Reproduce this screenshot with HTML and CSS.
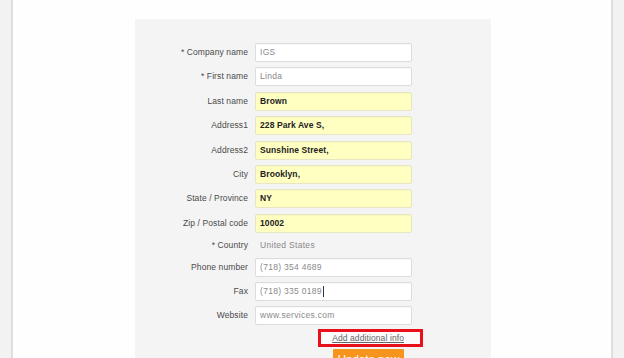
FILE: index.html
```html
<!DOCTYPE html>
<html>
<head>
<meta charset="utf-8">
<link rel="stylesheet" href="styles.css">
</head>
<body>
<div class="page">
  <div class="panel">
    <div class="form">
      <div class="label">* Company name</div>
      <div class="field">IGS</div>
      <div class="label">* First name</div>
      <div class="field">Linda</div>
      <div class="label">Last name</div>
      <div class="field filled">Brown</div>
      <div class="label">Address1</div>
      <div class="field filled">228 Park Ave S,</div>
      <div class="label">Address2</div>
      <div class="field filled">Sunshine Street,</div>
      <div class="label">City</div>
      <div class="field filled">Brooklyn,</div>
      <div class="label">State / Province</div>
      <div class="field filled">NY</div>
      <div class="label">Zip / Postal code</div>
      <div class="field filled">10002</div>
      <div class="label short">* Country</div>
      <div class="plain short">United States</div>
      <div class="label">Phone number</div>
      <div class="field">(718) 354 4689</div>
      <div class="label">Fax</div>
      <div class="field">(718) 335 0189<span class="caret"></span></div>
      <div class="label">Website</div>
      <div class="field">www.services.com</div>
      <div class="actions">
        <div class="highlight"><a class="more" href="#">Add additional info</a></div>
        <button class="update">Update now</button>
      </div>
    </div>
  </div>
</div>
</body>
</html>
```
FILE: styles.css
```css
html, body {
  margin: 0;
  height: 100%;
  overflow: hidden;
}
body {
  background: #f2f2f2;
  font-family: "Liberation Sans", Arial, sans-serif;
}
.page {
  margin: 0 11px;
  height: 100%;
  background: #fefefe;
  border-left: 2px solid #dedede;
  border-right: 2px solid #dedede;
  padding-top: 19px;
  box-sizing: border-box;
}
.panel {
  margin-left: 122px;
  width: 356px;
  height: 400px;
  background: #f4f4f4;
  padding-top: 24px;
  box-sizing: border-box;
}
.form {
  display: grid;
  grid-template-columns: 113px 157px;
  column-gap: 7px;
  row-gap: 5.4px;
  align-items: center;
}
.label {
  text-align: right;
  font-size: 8.5px;
  color: #4a4a4a;
  letter-spacing: 0.1px;
  line-height: 19px;
}
.label.short, .plain.short {
  line-height: 14px;
}
.plain {
  font-size: 8.5px;
  color: #8a8a8a;
  letter-spacing: 0.3px;
  padding-left: 5px;
}
.field {
  height: 19px;
  box-sizing: border-box;
  border: 1px solid #dcdcdc;
  border-radius: 2px;
  background: #fff;
  font-size: 8.5px;
  line-height: 17px;
  color: #8a8a8a;
  padding-left: 4px;
  letter-spacing: 0.3px;
  box-shadow: inset 0 1px 1px rgba(0,0,0,0.03);
}
.field.filled {
  background: #ffffc2;
  border-color: #e6e6c4;
  color: #222;
  font-weight: bold;
  letter-spacing: 0.1px;
}
.caret {
  display: inline-block;
  width: 0;
  height: 11px;
  border-left: 1px solid #333;
  vertical-align: middle;
  margin-left: 1px;
}
.actions {
  grid-column: 2;
  display: flex;
  flex-direction: column;
  align-items: flex-end;
  margin-top: -1.8px;
}
.highlight {
  border: 3px solid #e8101a;
  background: #fbfbfb;
  height: 18px;
  box-sizing: border-box;
  padding: 0 16px 0 11px;
  margin-right: -11px;
  display: flex;
  align-items: center;
}
.more {
  font-size: 8.5px;
  color: #666;
  letter-spacing: 0.1px;
  text-decoration: underline;
}
.update {
  margin-top: 2px;
  margin-right: 8px;
  width: 71px;
  height: 20px;
  border: 0;
  border-radius: 1px;
  background: #f7941d;
  color: #fff;
  font-family: "Liberation Sans", Arial, sans-serif;
  font-size: 11.5px;
  padding: 0;
}
```
